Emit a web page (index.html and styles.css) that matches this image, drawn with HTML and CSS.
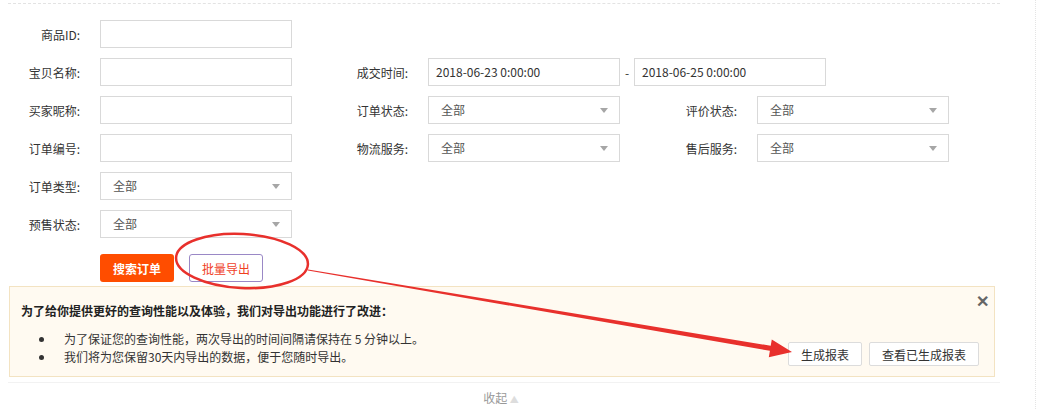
FILE: index.html
```html
<!DOCTYPE html>
<html lang="zh-CN">
<head>
    <meta charset="UTF-8">
    <title>订单搜索 - 批量导出</title>
    <link rel="stylesheet" href="styles.css">
</head>
<body>
    <div class="frame">
        <div class="search-panel">
            <div class="search-form">
                <label class="lbl lbl-a">商品ID:</label>
                <div class="field"></div>

                <label class="lbl lbl-a">宝贝名称:</label>
                <div class="field"></div>
                <label class="lbl lbl-b">成交时间:</label>
                <div class="date-range">
                    <div class="field">2018-06-23 0:00:00</div>
                    <span class="dash">-</span>
                    <div class="field">2018-06-25 0:00:00</div>
                </div>

                <label class="lbl lbl-a">买家昵称:</label>
                <div class="field"></div>
                <label class="lbl lbl-b">订单状态:</label>
                <div class="field select">全部</div>
                <label class="lbl lbl-c">评价状态:</label>
                <div class="field select">全部</div>

                <label class="lbl lbl-a">订单编号:</label>
                <div class="field"></div>
                <label class="lbl lbl-b">物流服务:</label>
                <div class="field select">全部</div>
                <label class="lbl lbl-c">售后服务:</label>
                <div class="field select">全部</div>

                <label class="lbl lbl-a">订单类型:</label>
                <div class="field select">全部</div>

                <label class="lbl lbl-a">预售状态:</label>
                <div class="field select">全部</div>

                <div class="actions">
                    <button class="btn btn-search">搜索订单</button>
                    <button class="btn btn-export">批量导出</button>
                </div>
            </div>

            <div class="notice">
                <span class="notice-close">&#10005;</span>
                <p class="notice-title">为了给你提供更好的查询性能以及体验，我们对导出功能进行了改进：</p>
                <div class="notice-body">
                    <ul class="notice-list">
                        <li>为了保证您的查询性能，两次导出的时间间隔请保持在 5 分钟以上。</li>
                        <li>我们将为您保留30天内导出的数据，便于您随时导出。</li>
                    </ul>
                    <div class="notice-btns">
                        <button class="btn-plain">生成报表</button>
                        <button class="btn-plain">查看已生成报表</button>
                    </div>
                </div>
            </div>

            <div class="fold">收起 <span class="fold-arrow">&#9650;</span></div>
        </div>
    </div>

    <!-- 截图上的红色标注 -->
    <svg class="marks" width="1039" height="409" viewBox="0 0 1039 409">
        <ellipse cx="242" cy="261" rx="66" ry="27" transform="rotate(3 242 261)" fill="none" stroke="#e8302c" stroke-width="2.5"/>
        <polygon fill="#e8302c" points="308,269.5 770.7,345.8 771.8,339.4 792,352 768.8,357.2 769.9,350.8 307.9,270.5"/>
    </svg>
</body>
</html>
```

FILE: styles.css
```css
html {
    background: #fff;
}

body {
    margin: 0;
    position: relative;
    font-family: "Noto Sans CJK SC", "Liberation Sans", sans-serif;
    font-size: 12px;
    color: #333;
}

.frame {
    width: 1035px;
    height: 409px;
    border-right: 1px dotted #e4e4e4;
    overflow: hidden;
}

/* 顶部虚线 */
.search-panel {
    width: 992px;
    margin: 3px 0 0 8px;
    border-top: 1px dashed #e3e3e3;
}

.search-form {
    display: grid;
    grid-template-columns: 92px 192px 136px 192px 137px 192px;
    grid-auto-rows: 28px;
    row-gap: 10px;
    padding-top: 16px;
}

.lbl {
    display: flex;
    align-items: center;
    justify-content: flex-end;
    padding-right: 20px;
    color: #333;
    white-space: nowrap;
}
.lbl-a { grid-column: 1; }
.lbl-b { grid-column: 3; }
.lbl-c { grid-column: 5; }

.field {
    position: relative;
    box-sizing: border-box;
    width: 192px;
    height: 28px;
    border: 1px solid #d9d9d9;
    background: #fff;
    padding: 0 7px;
    line-height: 26px;
    color: #333;
    white-space: nowrap;
}

.select {
    padding-left: 12px;
    color: #555;
}
.select:after {
    content: "";
    position: absolute;
    right: 11px;
    top: 11px;
    border-left: 4px solid transparent;
    border-right: 4px solid transparent;
    border-top: 5px solid #a6a6a6;
}

.date-range {
    grid-column: 4 / span 3;
    display: flex;
    align-items: center;
}
.dash {
    width: 14px;
    text-align: center;
    color: #333;
}

.actions {
    grid-column: 2 / span 3;
    display: flex;
    gap: 15px;
    margin-top: 6px;
}

.btn {
    box-sizing: border-box;
    width: 74px;
    height: 28px;
    font-family: inherit;
    font-size: 12px;
    border-radius: 3px;
    cursor: pointer;
}
.btn-search {
    border: none;
    background: #ff4d00;
    color: #fff;
    font-weight: bold;
}
.btn-export {
    border: 1px solid #9a88c6;
    background: #fff;
    color: #f0401f;
}

/* 导出提示 */
.notice {
    position: relative;
    box-sizing: border-box;
    width: 986px;
    margin: 10px 0 0 1px;
    padding: 15px 15px 10px 11px;
    background: #fffaf1;
    border: 1px solid #f3e3c2;
}
.notice-close {
    position: absolute;
    top: 1px;
    right: 5px;
    font-size: 16px;
    font-weight: bold;
    color: #666;
    cursor: pointer;
}
.notice-title {
    margin: 0;
    line-height: 17px;
    font-weight: bold;
    color: #222;
}
.notice-body {
    display: flex;
    justify-content: space-between;
    align-items: flex-end;
    margin-top: 11px;
}
.notice-list {
    margin: 0;
    padding-left: 34px;
    line-height: 18px;
    color: #333;
}
.notice-list li {
    padding-left: 9px;
}
.notice-btns {
    display: flex;
    gap: 7px;
}
.btn-plain {
    box-sizing: border-box;
    height: 24px;
    padding: 0 12px;
    font-family: inherit;
    font-size: 12px;
    color: #333;
    background: #fff;
    border: 1px solid #dcdcdc;
    border-radius: 2px;
}

.fold {
    margin-top: 5px;
    border-top: 1px solid #f2f2f2;
    padding: 6px 6px 0 0;
    text-align: center;
    color: #999;
    line-height: 18px;
}
.fold-arrow {
    font-size: 9px;
    color: #ddd;
}

.marks {
    position: absolute;
    left: 0;
    top: 0;
    pointer-events: none;
}
```
